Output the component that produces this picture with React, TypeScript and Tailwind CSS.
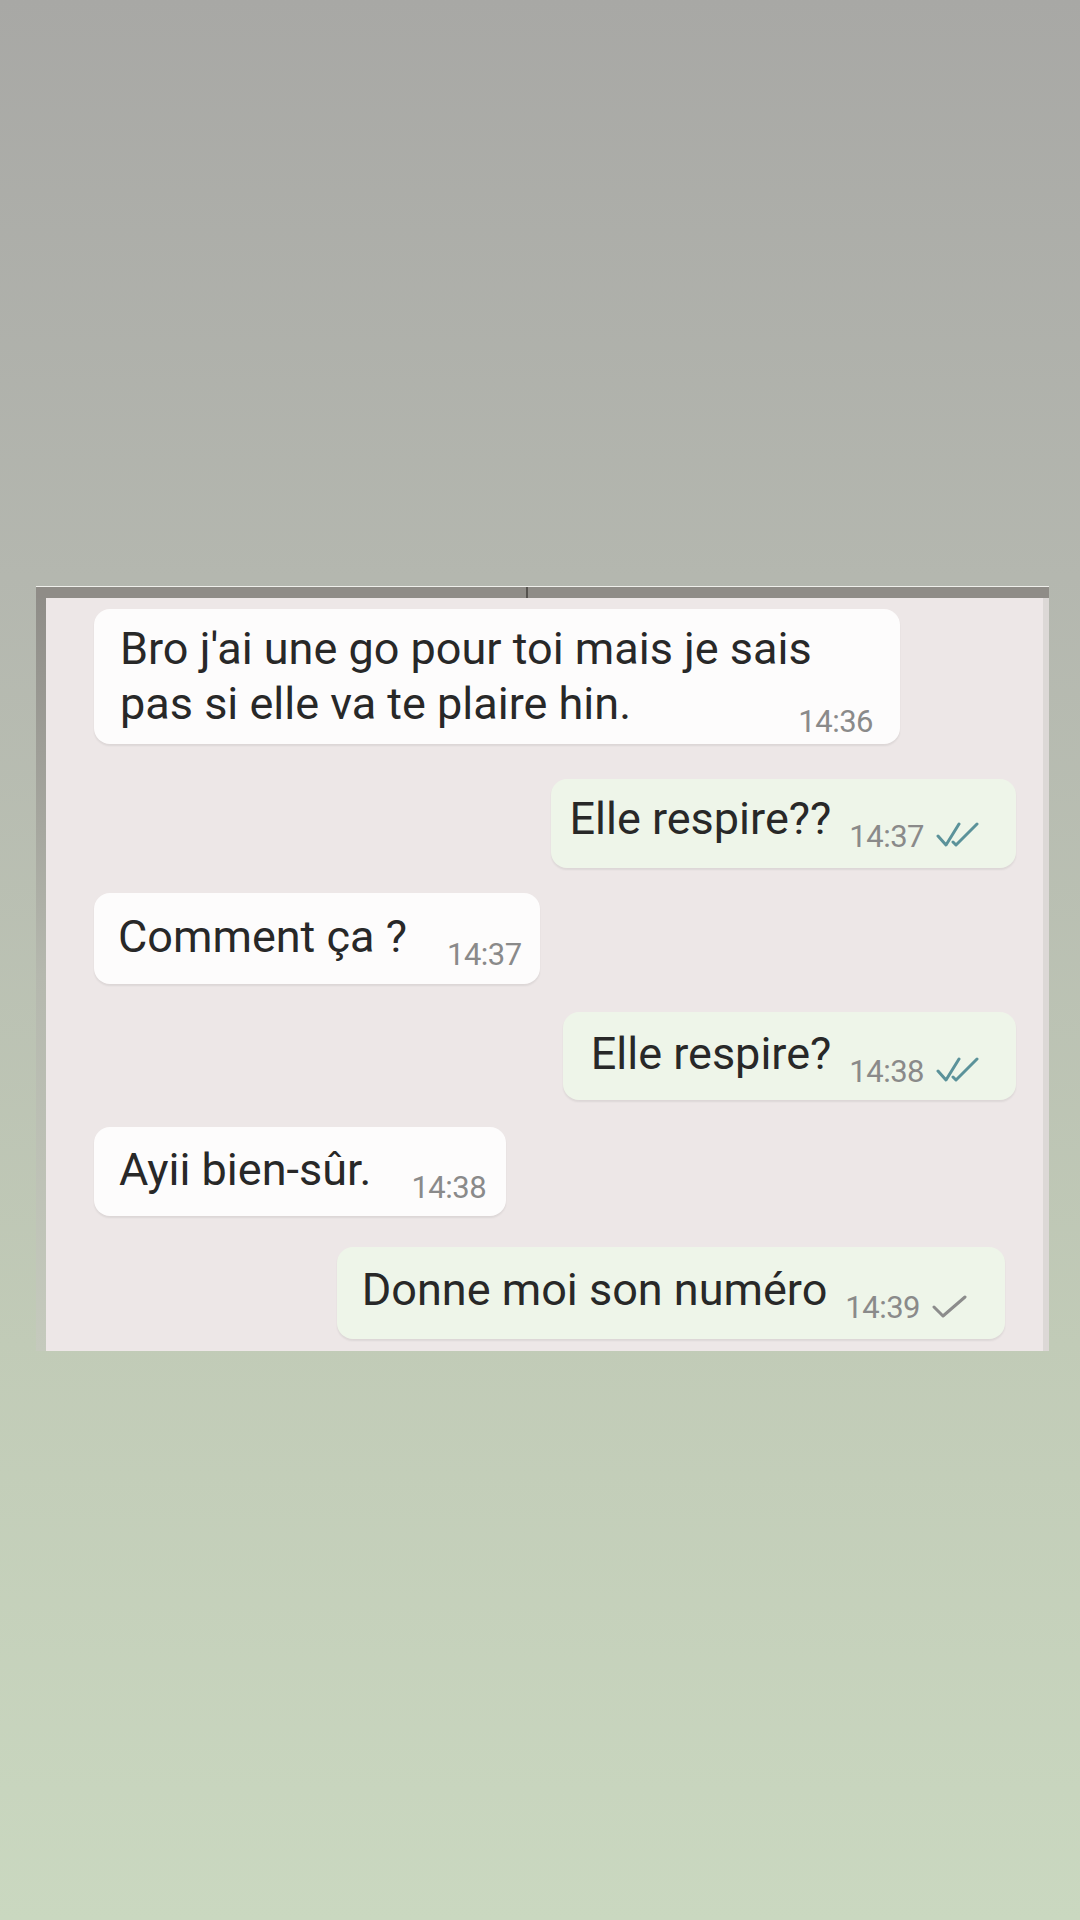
import React from "react";

type Tick = "double" | "single" | "none";

interface BubbleProps {
  side: "in" | "out";
  time: string;
  tick?: Tick;
  className?: string;
  children: React.ReactNode;
}

function DoubleTick() {
  return (
    <svg width="44" height="25" viewBox="0 0 44 25" className="ml-[12px] inline-block">
      <path d="M2 14 L10 23 L23 2" fill="none" stroke="#5b929a" strokeWidth="3" strokeLinecap="round" strokeLinejoin="round" />
      <path d="M17 20 L20 23 L41 2" fill="none" stroke="#5b929a" strokeWidth="3" strokeLinecap="round" strokeLinejoin="round" />
    </svg>
  );
}

function SingleTick() {
  return (
    <svg width="36" height="23" viewBox="0 0 36 23" className="ml-[12px] inline-block">
      <path d="M2 12 L11 21 L33 2" fill="none" stroke="#8c8c8c" strokeWidth="3" strokeLinecap="round" strokeLinejoin="round" />
    </svg>
  );
}

function Stamp({ time, tick = "none" }: { time: string; tick?: Tick }) {
  return (
    <span className="relative top-[13px] inline-flex items-baseline text-[31px] leading-none text-[#8a8a8a] tracking-[-0.5px]">
      {time}
      {tick === "double" && <DoubleTick />}
      {tick === "single" && <SingleTick />}
    </span>
  );
}

function Bubble({ side, time, tick = "none", className = "", children }: BubbleProps) {
  const tone =
    side === "in"
      ? "self-start ml-[48px] bg-[#fdfcfc]"
      : "self-end mr-[27px] bg-[#eef5e9]";
  return (
    <div
      className={`flex items-baseline rounded-[16px] shadow-[0_2px_2px_rgba(0,0,0,0.07)] ${tone} ${className}`}
    >
      <span className="whitespace-nowrap">{children}</span>
      <span className={side === "in" ? "ml-[40px]" : "ml-[18px]"}>
        <Stamp time={time} tick={tick} />
      </span>
    </div>
  );
}

export default function App() {
  return (
    <div className="w-[1080px] h-[1920px] pt-[586px] bg-[linear-gradient(180deg,#a8a8a5_0%,#b4b7af_30%,#c1cbb7_70%,#cad8c0_100%)] font-['Roboto','Liberation_Sans',sans-serif]">
      <div className="ml-[36px] w-[1013px] h-[765px] flex flex-col overflow-hidden">
        <div className="h-px bg-[#f0f0ec]" />
        <div className="relative h-[11px] bg-[#8f8c87]">
          <span className="absolute left-[490px] top-0 h-full w-[2px] bg-[#55524e]" />
        </div>
        <div className="flex flex-1 min-h-0">
          <div className="w-[10px] bg-linear-to-b from-[#8f8d88] via-[#b5b8ae] to-[#c5cabd]" />
          <div className="flex-1 flex flex-col bg-[#ede7e7] text-[45px] leading-[55px] text-[#282828]">
            {/* first message wraps, so its stamp sits on the last line */}
            <div className="self-start ml-[48px] mt-[11px] w-[806px] rounded-[16px] bg-[#fdfcfc] pl-[26px] pr-[27px] pt-[12px] pb-[13px] shadow-[0_2px_2px_rgba(0,0,0,0.07)]">
              <div className="whitespace-nowrap">Bro j'ai une go pour toi mais je sais</div>
              <div className="flex items-baseline justify-between">
                <span className="whitespace-nowrap">pas si elle va te plaire hin.</span>
                <Stamp time="14:36" />
              </div>
            </div>

            <Bubble side="out" time="14:37" tick="double" className="mt-[35px] pl-[18px] pr-[36px] pt-[12px] pb-[22px]">
              Elle respire??
            </Bubble>

            <Bubble side="in" time="14:37" className="mt-[25px] pl-[24px] pr-[18px] pt-[16px] pb-[20px]">
              Comment ça ?
            </Bubble>

            <Bubble side="out" time="14:38" tick="double" className="mt-[28px] pl-[28px] pr-[36px] pt-[14px] pb-[19px]">
              Elle respire?
            </Bubble>

            <Bubble side="in" time="14:38" className="mt-[27px] pl-[25px] pr-[20px] pt-[15px] pb-[19px]">
              Ayii bien-sûr.
            </Bubble>

            <Bubble side="out" time="14:39" tick="single" className="mt-[31px] mr-[38px] pl-[25px] pr-[37px] pt-[15px] pb-[22px]">
              Donne moi son numéro
            </Bubble>
          </div>
          <div className="w-[6px] bg-[#dcd8d6]" />
        </div>
      </div>
    </div>
  );
}
